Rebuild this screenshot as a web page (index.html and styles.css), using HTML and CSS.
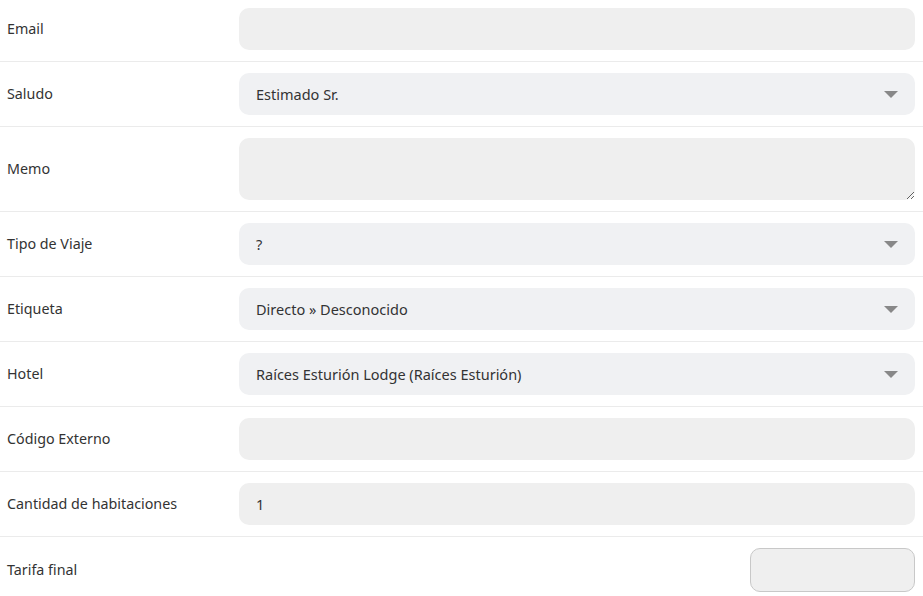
FILE: index.html
```html
<!DOCTYPE html>
<html lang="es">
<head>
<meta charset="utf-8">
<link rel="stylesheet" href="styles.css">
</head>
<body>
<div class="form">
  <div class="row">
    <label class="label">Email</label>
    <div class="field"><input class="input" type="text"></div>
  </div>
  <div class="row">
    <label class="label">Saludo</label>
    <div class="field select-wrap">
      <div class="select">Estimado Sr.</div>
      <svg class="arrow" width="14" height="7" viewBox="0 0 14 7"><path d="M0 0H14L7 7Z" fill="#888"/></svg>
    </div>
  </div>
  <div class="row">
    <label class="label">Memo</label>
    <div class="field"><textarea class="textarea"></textarea></div>
  </div>
  <div class="row">
    <label class="label">Tipo de Viaje</label>
    <div class="field select-wrap">
      <div class="select">?</div>
      <svg class="arrow" width="14" height="7" viewBox="0 0 14 7"><path d="M0 0H14L7 7Z" fill="#888"/></svg>
    </div>
  </div>
  <div class="row">
    <label class="label">Etiqueta</label>
    <div class="field select-wrap">
      <div class="select">Directo » Desconocido</div>
      <svg class="arrow" width="14" height="7" viewBox="0 0 14 7"><path d="M0 0H14L7 7Z" fill="#888"/></svg>
    </div>
  </div>
  <div class="row">
    <label class="label">Hotel</label>
    <div class="field select-wrap">
      <div class="select">Raíces Esturión Lodge (Raíces Esturión)</div>
      <svg class="arrow" width="14" height="7" viewBox="0 0 14 7"><path d="M0 0H14L7 7Z" fill="#888"/></svg>
    </div>
  </div>
  <div class="row">
    <label class="label">Código Externo</label>
    <div class="field"><input class="input" type="text"></div>
  </div>
  <div class="row">
    <label class="label">Cantidad de habitaciones</label>
    <div class="field"><input class="input" type="text" value="1"></div>
  </div>
  <div class="row last">
    <label class="label">Tarifa final</label>
    <div class="field right"><input class="input small" type="text"></div>
  </div>
</div>
</body>
</html>
```
FILE: styles.css
```css
* { box-sizing: border-box; }
html, body { margin: 0; padding: 0; background: #fff; }
body {
  font-family: "Noto Sans", "Open Sans", sans-serif;
  font-size: 14.3px;
  color: #333;
  overflow: hidden;
}
.form { width: 923px; }
.row {
  display: grid;
  grid-template-columns: 232px 1fr;
  align-items: center;
  padding: 11px 8px 11px 7px;
  border-bottom: 1px solid #ebebeb;
}
.row:first-child { padding-top: 8px; }
.row.last { border-bottom: none; }
.label { line-height: 20px; }
.field { display: flex; }
.field.right { justify-content: flex-end; }
.input, .textarea, .select {
  width: 100%;
  height: 42px;
  border: none;
  border-radius: 10px;
  background: #efefef;
  font-family: inherit;
  font-size: 14.5px;
  color: #333;
  padding: 0 17px;
  outline: none;
  margin: 0;
}
.textarea {
  height: 62px;
  display: block;
  resize: vertical;
  padding: 10px 17px;
}
.select-wrap { position: relative; }
.select {
  background: #f0f1f3;
  display: flex;
  align-items: center;
}
.arrow {
  position: absolute;
  right: 17px;
  top: 18px;
}
.input.small {
  width: 165px;
  height: 44px;
  border: 1px solid #c8c8c8;
}
```
